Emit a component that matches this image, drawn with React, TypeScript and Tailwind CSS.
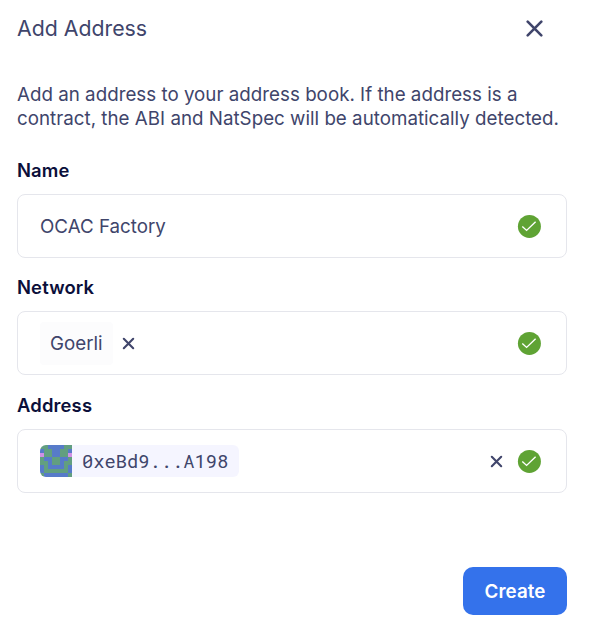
import React from "react";

const CELLS = [
  "ggbbbbgg",
  "bggbbggb",
  "pggbbggp",
  "gbbggbbg",
  "ggbggbgg",
  "bgbbbbgb",
  "bggggggb",
  "gbbbbbbg",
];

const COLORS: Record<string, string> = { g: "#629f80", b: "#577bc9", p: "#cf90e6" };

function Identicon() {
  return (
    <svg width="32" height="32" viewBox="0 0 8 8" shapeRendering="crispEdges" className="block shrink-0">
      {CELLS.map((row, y) =>
        row.split("").map((c, x) => (
          <rect key={`${x}-${y}`} x={x} y={y} width="1" height="1" fill={COLORS[c]} />
        )),
      )}
    </svg>
  );
}

function Cross({ size, stroke, inset }: { size: number; stroke: number; inset: number }) {
  const far = size - inset;
  return (
    <svg width={size} height={size} viewBox={`0 0 ${size} ${size}`} fill="none" className="block shrink-0">
      <path
        d={`M${inset} ${inset}L${far} ${far}M${far} ${inset}L${inset} ${far}`}
        stroke="#40456b"
        strokeWidth={stroke}
        strokeLinecap="round"
      />
    </svg>
  );
}

function Valid() {
  return (
    <svg width="24" height="24" viewBox="0 0 24 24" fill="none" className="block shrink-0">
      <circle cx="12.4" cy="12.4" r="11.5" fill="#5fa334" />
      <path d="M5.3 12.4L9.6 16.4L18.6 7.7" stroke="white" strokeWidth="1.4" />
    </svg>
  );
}

function Field({ label, className, children }: { label: string; className: string; children: React.ReactNode }) {
  return (
    <section className={className}>
      <h2 className="h-6 text-[18.4px] leading-6 font-semibold tracking-[0.16px] text-[#0b0f3a]">{label}</h2>
      <div className="mt-3 flex h-16 items-center rounded-lg border border-[#e5e6ec] pr-[25px] pl-[22px]">
        {children}
      </div>
    </section>
  );
}

export default function App() {
  return (
    <main className="h-[636px] w-[596px] bg-white pt-4 pr-[29px] pl-[17px] font-['Inter',sans-serif] text-[#40456b]">
      <header className="flex h-6 items-center justify-between pr-6">
        <h1 className="text-[21.3px] leading-6">Add Address</h1>
        <button aria-label="Close">
          <Cross size={17} stroke={2.6} inset={1.7} />
        </button>
      </header>
      <p className="mt-[43px] text-[18.75px] leading-6 tracking-[0.01px] whitespace-nowrap">
        Add an address to your address book. If the address is a
        <br />
        contract, the ABI and NatSpec will be automatically detected.
      </p>
      <Field label="Name" className="mt-[27px]">
        <span className="flex-1 pt-0.5 text-[18.75px]">OCAC Factory</span>
        <Valid />
      </Field>
      <Field label="Network" className="mt-[17px]">
        <span className="flex h-[43px] items-center rounded bg-[#fcfcfd] px-[10px] pt-0.5 text-[18.75px]">Goerli</span>
        <span className="ml-[9px] flex-1">
          <Cross size={13} stroke={2.1} inset={1.8} />
        </span>
        <Valid />
      </Field>
      <Field label="Address" className="mt-[18px]">
        <span className="flex h-8 w-[199px] items-center overflow-hidden rounded-md bg-[#f5f5ff]">
          <Identicon />
          <span className="ml-[10px] font-['Roboto_Mono','DejaVu_Sans_Mono',monospace] text-[18.75px]">0xeBd9...A198</span>
        </span>
        <span className="flex-1" />
        <span className="mr-[14px]">
          <Cross size={13} stroke={2.1} inset={1.8} />
        </span>
        <span className="pb-px">
          <Valid />
        </span>
      </Field>
      <div className="mt-[74px] flex justify-end">
        <button className="h-12 w-[104px] rounded-[10px] bg-[#3472eb] pt-0.5 text-[18.8px] font-semibold tracking-[0.1px] text-white">
          Create
        </button>
      </div>
    </main>
  );
}
